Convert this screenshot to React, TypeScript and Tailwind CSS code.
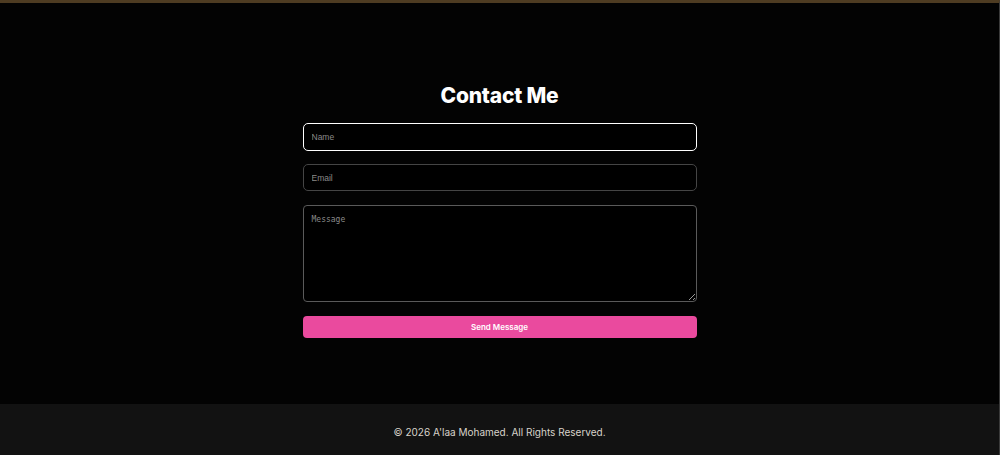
import React from "react";

export default function App() {
  return (
    <div className="min-h-[455px] w-full bg-black border-t-[3px] border-[#4e3c22] border-r border-r-[#3a3a3a] flex flex-col" style={{ fontFamily: "Inter, 'Open Sans', sans-serif" }}>
      <main className="bg-[#030303] flex flex-col items-center pt-[79px] pb-[66px]">
        <h2 className="text-[21px] leading-[28px] font-extrabold text-white tracking-[-0.2px] mb-[13px]">Contact Me</h2>
        <form className="w-[394px] flex flex-col gap-[13px]" onSubmit={(e) => e.preventDefault()}>
          <input
            type="text"
            placeholder="Name"
            className="h-[28px] w-full rounded-[5px] border border-white bg-black px-[8px] text-[8.5px] text-white placeholder:text-[#8a8a8a] outline-none"
            style={{ fontFamily: "'Liberation Sans', Arial, sans-serif" }}
          />
          <input
            type="email"
            placeholder="Email"
            className="h-[27px] w-full rounded-[5px] border border-[#454545] bg-black px-[8px] text-[8.5px] text-white placeholder:text-[#8a8a8a] outline-none"
            style={{ fontFamily: "'Liberation Sans', Arial, sans-serif" }}
          />
          <textarea
            placeholder="Message"
            className="mt-[1px] h-[97px] w-full rounded-[4px] border border-[#5a5a5a] bg-black px-[8px] py-[8px] text-[8px] text-white placeholder:text-[#8a8a8a] outline-none"
            style={{ fontFamily: "'DejaVu Sans Mono', 'Liberation Mono', monospace" }}
          />
          <button
            type="submit"
            className="mt-[1px] h-[22px] w-full rounded-[4px] bg-[#ea4a9e] text-[8px] font-semibold text-white"
          >
            Send Message
          </button>
        </form>
      </main>
      <footer className="bg-[#121212] flex-1 flex justify-center pt-[20px] pb-[20px]">
        <p className="text-[10px] leading-[16px] text-[#d8d2ca]">© 2026 A'laa Mohamed. All Rights Reserved.</p>
      </footer>
    </div>
  );
}
